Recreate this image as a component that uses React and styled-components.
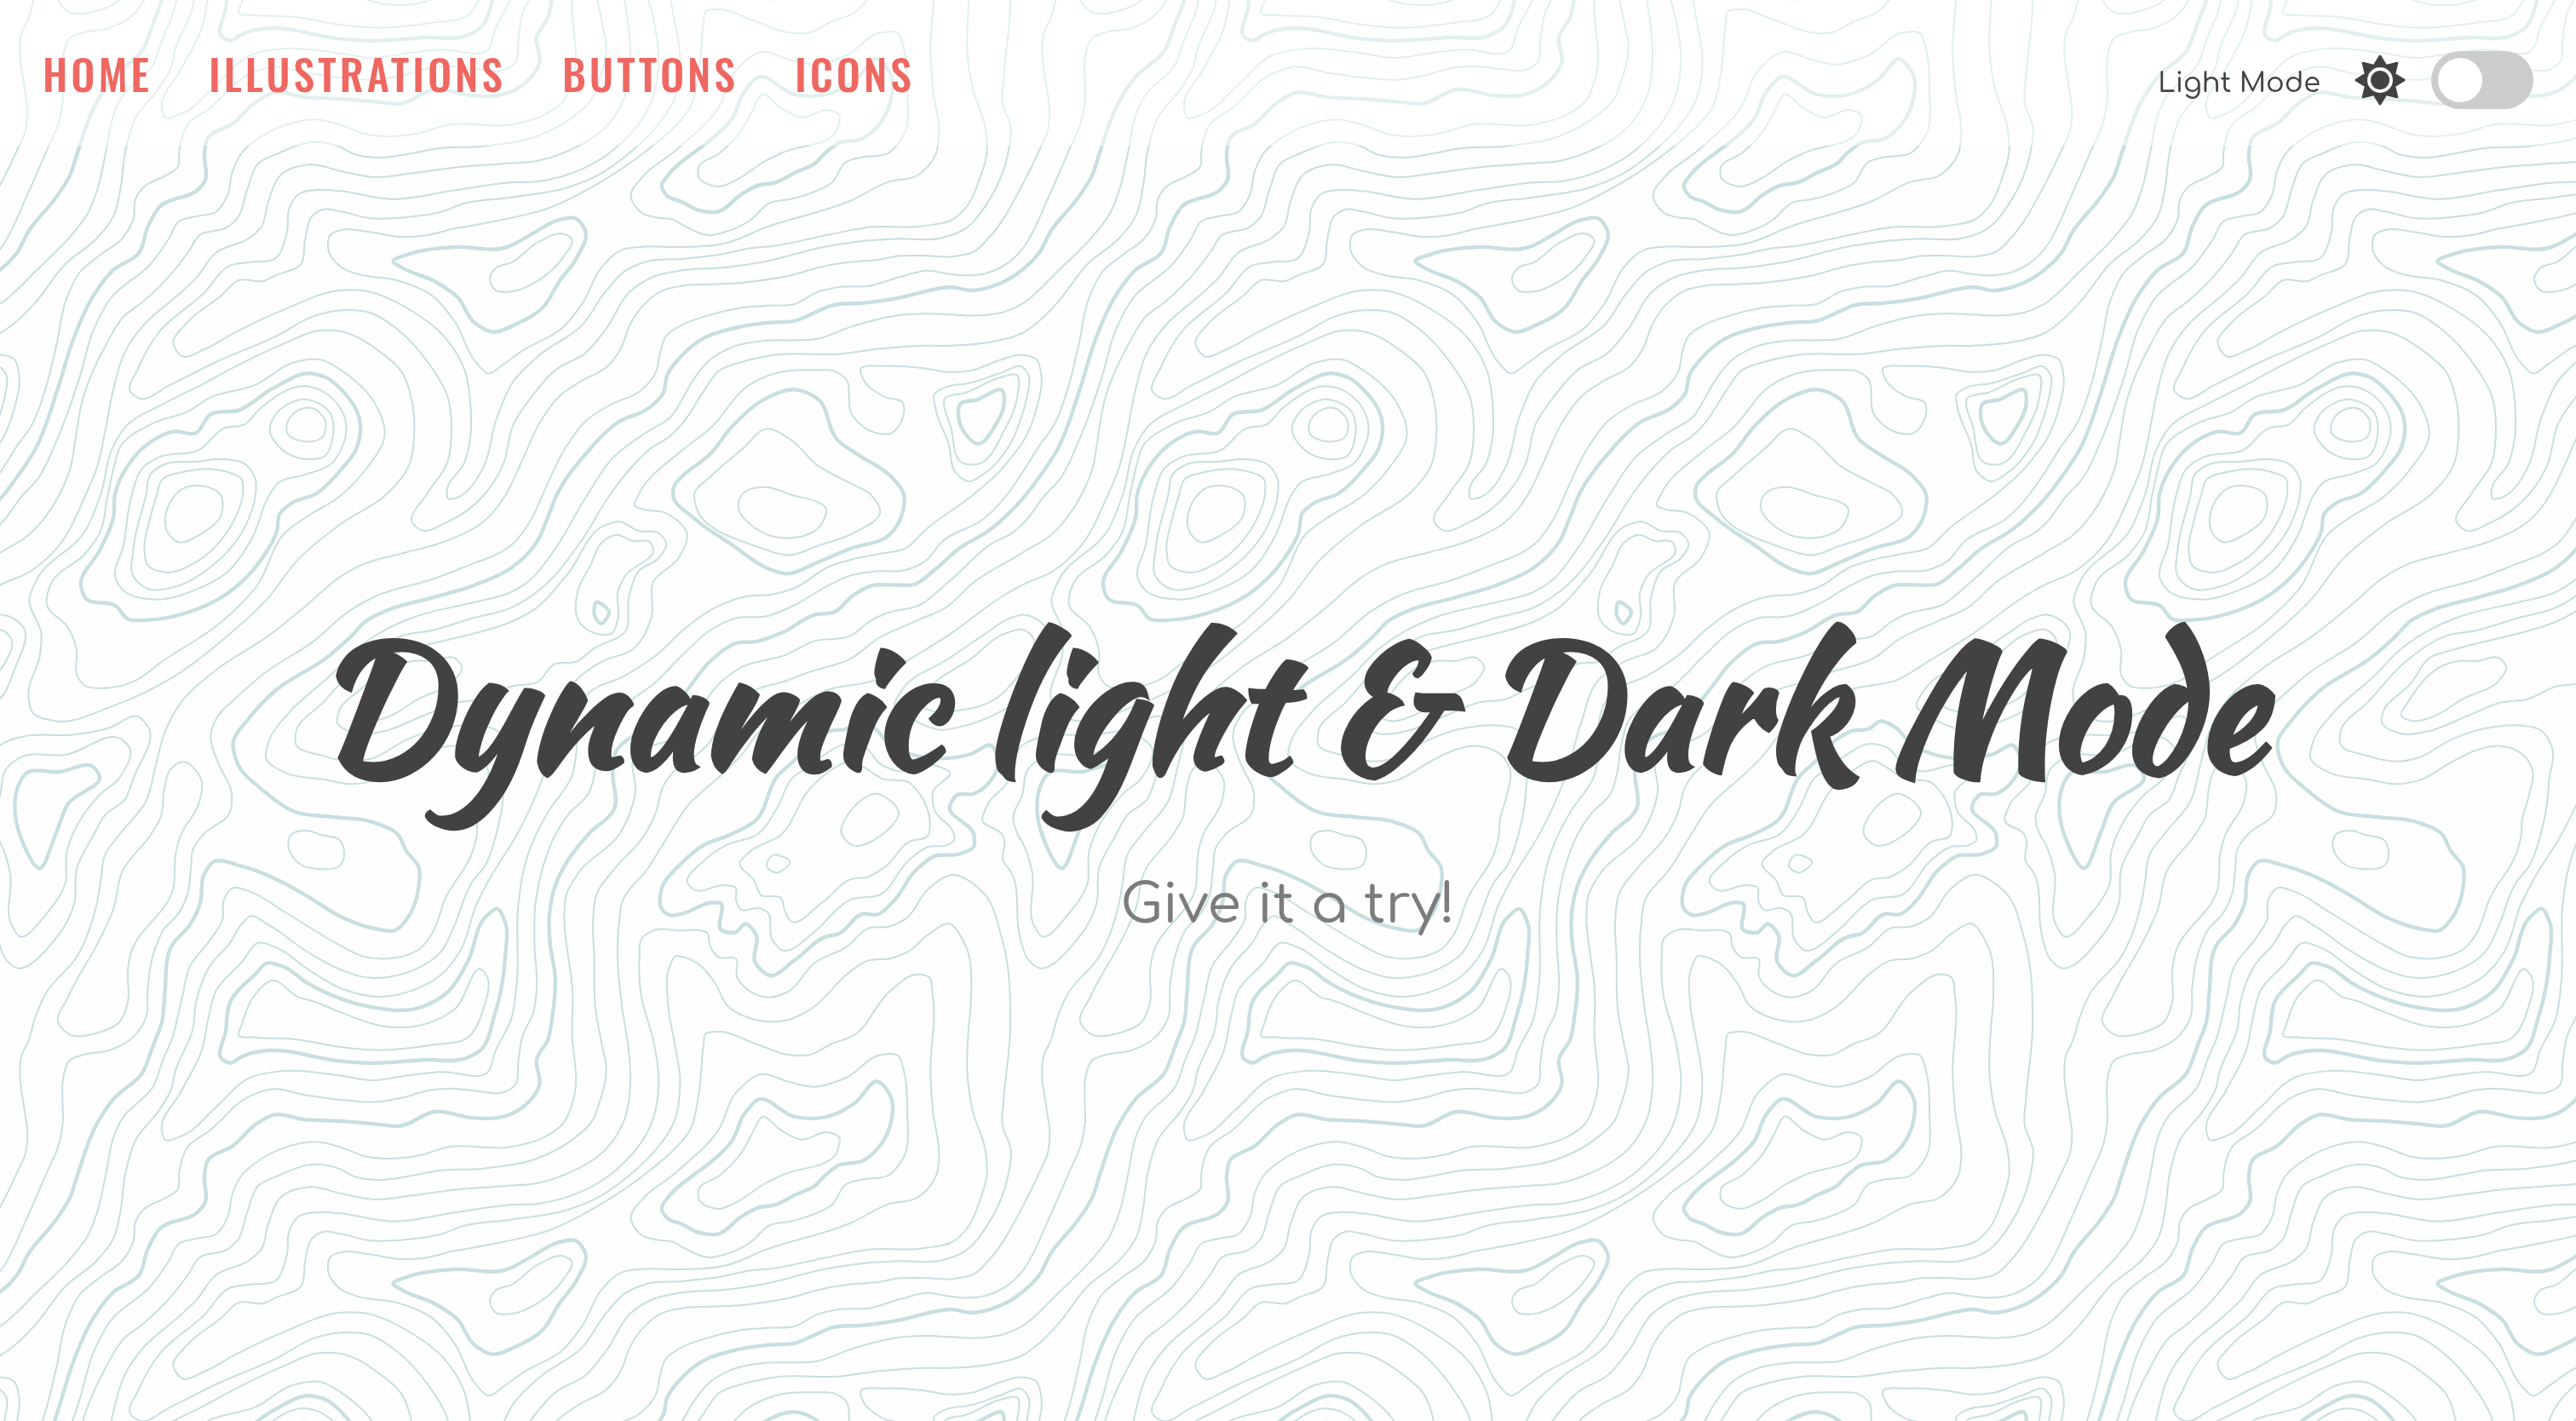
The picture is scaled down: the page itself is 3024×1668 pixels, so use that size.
import React, { useState } from 'react';
import styled, { createGlobalStyle, ThemeProvider } from 'styled-components';

const themes = {
  light: {
    page: '#fefefe',
    veil: 'rgba(255, 255, 255, 0.5)',
    contour: '#c7dfdf',
    text: '#424242',
    muted: '#7c7c7c',
    accent: '#ef6761',
    track: '#cccccc',
  },
  dark: {
    page: '#1f2326',
    veil: 'rgba(0, 0, 0, 0.5)',
    contour: '#36494b',
    text: '#f2f2f2',
    muted: '#b5b5b5',
    accent: '#ef6761',
    track: '#ef6761',
  },
};

/* ---------- Contour map ---------- */

// The map repeats every TILE units in both directions. Each line is a list of
// x,y points; a letter switches to the map sheet whose origin it names.
const TILE = 3600;
const SHEETS = {
  A: [0, 0], B: [1200, 0], C: [2400, 0],
  D: [0, 1200], E: [672, 1200], F: [1800, 1200], G: [3000, 1200],
  H: [0, 2400], I: [1200, 2400], J: [2400, 2400],
};

const MINOR = [
  'A 55,0 0,112 C 1080,300 1035,343 950,364 850,360 770,361 690,375 600,382 500,398 370,433 220,455 100,461 B 1200,467 1130,485 1070,530 1020,600 985,690 940,750 850,800 770,855 700,950 640,1080 582,1200 E 1080,45 1020,105 900,165 760,205 600,250 D 1200,290 1070,400 940,503 760,620 640,730 580,840 550,950 515,1080 420,1200 H 370,70 355,160 340,245 270,430 160,560 125,640 100,725 75,780 70,840 85,960 97,1060 90,1120',
  'A 160,0 90,160 30,290 0,337 C 1150,385 1080,420 1000,430 930,423 870,413 770,435 660,467 560,470 480,488 400,530 300,536 200,545 80,575 0,605 B 1145,645 1125,700 1110,770 1050,840 950,885 860,945 790,1040 712,1200 F 70,90 0,180 E 1090,205 980,250 850,300 650,360 560,410 430,520 260,630 140,735 D 780,765 742,850 770,950 815,1050 810,1120 715,1200 H 680,50 672,120 660,210 630,275 575,335 540,420 520,540 515,640 460,720 380,760 300,773 245,795 222,860 220,930 222,1000 210,1080',
  'A 372,0 345,120 310,210 250,290 120,420 50,490 0,530 C 1130,560 1050,571 950,568 870,564 750,572 600,610 470,655 390,658 300,659 180,682 100,727 40,800 0,870 B 1165,925 1080,980 960,1070 870,1200 F 150,200 70,300 0,345 E 1000,380 780,435 690,475 590,540 490,640 350,765 275,870 265,930 330,980 470,1005 570,1021 650,1007 760,945 860,898 930,887 1010,915 1047,975 1035,1060 1010,1150 I 479,0 460,70 370,220 320,350 280,400 210,430 140,436 70,425 0,390 H 1000,270 880,200 820,187 788,230 785,295 740,370 670,460 640,580 605,720 575,790 540,885 430,1000 405,1050',
  'A 440,0 425,120 400,220 340,300 235,385 120,530 60,590 0,633 C 1100,662 950,677 830,678 700,688 550,707 340,709 230,730 130,767 80,835 0,955 B 1160,995 1090,1040 1020,1110 950,1200 F 250,160 120,320 0,400 E 1000,435 850,480 740,500 600,590 470,730 370,840 370,880 460,920 580,941 640,930 760,865 880,825 990,814 1080,835 1115,890 1105,1010 1095,1110 1075,1200 I 510,105 460,170 400,320 350,415 270,470 170,500 90,502 0,475 H 1080,410 950,320 880,287 850,315 810,380 740,460 690,590 680,680 615,840 605,890 560,970 480,1070',
  'A 630,0 628,45 580,80 510,115 478,160 470,230 430,300 350,360 280,420 235,510 200,670 160,830 110,960 60,1030 0,1125 C 1148,1200 G 460,90 320,165 260,235 190,267 80,272 0,285 F 1120,320 1000,390 900,430 790,437 700,480 600,570 500,670 430,720 340,790 310,880 297,970 275,1050 200,1130 155,1200 I 710,120 685,250 682,380 690,540 680,620 640,710 625,800 615,880 570,907 480,902 390,893 310,900 210,927 120,941 0,933 H 1080,917 960,895 880,920 740,1040 660,1100',
  'A 850,0 820,60 800,150 760,207 690,222 630,240 595,300 530,390 390,510 330,620 280,790 200,1010 130,1150 83,1200 D 0,107 G 560,140 500,170 340,310 240,390 120,420 60,450 0,497 F 1060,520 970,565 810,610 740,660 690,720 620,830 550,870 500,885 435,925 438,1050 380,1200 I 840,130 795,210 787,290 800,420 815,530 815,700 822,920 780,1020 700,1072 590,1100 380,1099 280,1128 170,1140 80,1130 0,1100 H 1110,1081 1000,1102 900,1155',
  'A 980,0 910,35 870,130 835,230 800,260 700,290 665,345 590,440 500,525 440,570 370,680 290,870 265,1010 250,1100 210,1200 D 160,80 100,145 0,207 G 430,310 330,400 230,445 90,510 0,577 F 1040,630 960,660 860,690 770,750 720,840 690,885 650,920 580,970 535,1030 510,1120 470,1200 I 960,125 905,200 888,310 893,430 898,620 920,740 935,820 905,960 890,1000 820,1070 690,1140 500,1175 340,1183 250,1200 B 135,15 40,0 I 0,1178 H 1110,1160',
  'A 1200,62 1090,40 990,75 945,170 920,260 875,300 760,350 690,440 620,505 510,600 440,700 395,850 370,980 340,1110 303,1200 D 200,190 110,270 0,320 G 530,360 350,490 190,590 80,655 F 1115,690 1020,737 880,830 810,920 745,985 620,1100 555,1200 I 1080,120 990,240 982,290 975,430 990,600 1013,750 1020,870 1000,1000 940,1100 780,1200 B 690,27 580,36 400,50 250,70 120,84',
  'A 1200,133 1130,128 1050,145 1020,190 1010,280 970,370 880,383 810,395 720,490 560,630 490,750 460,840 490,862 600,815 760,735 980,640 1100,575 1200,553 B 100,560 200,620 310,740 380,870 390,970 375,1090 303,1200 E 780,100 810,127 900,100 1035,0 B 570,1100 610,950 670,860 760,760 860,705 940,610 1020,485 1100,435 1200,412 C 150,402 300,380 500,330 620,311 760,301 910,299 1000,265 1080,170 1150,0 J 1160,1110 1130,1020 1135,930 1158,680 1130,370 1060,200 950,141 870,190 790,295 730,323 660,328 580,395 470,450 370,555 310,572 240,550 195,500 193,437 130,430 100,390 90,345 70,337 0,337 I 1100,337 1060,365 1052,430 1057,560 1100,720 1120,870 1100,1000 945,1200 B 850,55 700,98 600,103 400,130 180,161',
  'A 1200,205 1140,197 1100,220 1075,300 1060,390 970,430 930,449 840,447 780,500 660,595 610,670 640,714 720,690 820,635 1000,550 1200,482 B 70,482 250,555 360,640 435,760 458,900 455,1010 435,1090 375,1185 E 905,15 930,15 B 432,1200 500,1110 550,930 610,800 700,710 850,605 930,490 1000,415 1080,380 1200,372 C 130,357 250,333 320,327 500,290 660,260 850,256 960,230 1010,180 1050,90 1075,0 J 1070,1110 1025,970 1007,850 1010,700 1020,570 1000,390 940,312 870,350 800,410 740,434 650,445 590,485 460,610 380,650 240,645 160,600 120,525 60,455 0,428 I 1180,427 1160,460 1153,600 1175,730 1195,860 1170,1020 1100,1120 1015,1200 B 900,80 800,120 600,155 430,178 350,207 230,225 100,228',
  'A 1200,270 1165,285 1155,330 1200,400 B 60,425 200,448 320,500 400,590 480,740 520,775 570,745 640,695 780,615 850,530 920,400 990,340 1050,330 1200,330 C 150,318 300,260 600,165 730,100 830,78 897,0 J 907,1130 885,970 877,840 885,570 870,500 830,491 740,545 600,710 530,735 450,775 370,773 260,735 120,693 85,700 78,740 60,920 30,1040 0,1080 I 1065,1200 B 900,110 740,190 550,238 400,265 290,290 200,293 100,277',
  'B 1167,0 1070,75 1022,150 1060,210 1120,227 1170,233 1200,250 C 100,288 160,275 240,237 310,175 390,160 450,142 530,103 580,30 640,13 727,0 J 780,1140 795,970 785,840 760,775 700,775 580,855 470,887 380,870 280,843 190,910 130,1040 0,1172',
  'C 133,0 60,50 60,80 130,117 200,90 290,30 350,0 J 550,1110 555,1065 520,1048 420,1073 350,1040 285,992 250,1050 210,1120',
  'B 545,405 600,385 700,310 790,285 812,300 780,370 700,445 600,487 545,482 525,440',
  'A 1200,627 1120,625 1000,670 850,740 700,820 580,880 440,965 395,1040 355,1200 D 300,130 130,300 103,370 145,490 140,570 100,710 115,770 190,798 400,745 600,650 800,500 940,370 1050,230 1200,105 E 690,0 B 240,1100 258,1000 250,870 215,770 140,700',
  'A 1200,763 1130,727 1030,738 900,815 740,860 660,910 540,950 420,1040 405,1090 380,1200 D 350,140 300,210 180,315 165,390 240,470 270,550 272,640 300,675 360,683 480,655 570,590 780,450 900,330 1010,130 1080,80 1200,5 B 90,1110 155,990 120,880 50,800',
  'A 1200,900 1140,840 1075,820 920,895 860,955 790,968 700,1045 560,1070 500,1110 465,1200 D 435,180 408,300 430,335 550,371 680,340 800,275 890,150 950,0 A 980,1160 1080,1130 1170,1090 1200,1045 B 20,970',
  'A 970,920 1080,867 1160,910 1172,1000 1145,1065 1080,1077 990,1040 950,970',
  'A 1010,955 1050,905 1100,897 1145,940 1135,1000 1090,1015 1010,980',
  'A 515,1200 530,1130 580,1095 700,1085 780,1077 870,1100 900,1150 900,1200 D 870,100 750,250 620,325 520,333 470,290 470,190',
  'A 553,1200 570,1150 640,1123 800,1122 850,1145 855,1200 D 820,100 680,245 590,276 520,250 508,190 525,100',
  'D 620,0 590,50 588,130 625,168 700,145 780,70 775,0 A 740,1178 690,1170 640,1183',
  'C 1200,710 1130,725 1020,765 940,770 840,755 720,749 630,762 640,795 710,855 780,880 780,930 740,985 660,975 600,920 575,790 540,767 480,763 330,775 240,815 100,970 0,1048 B 1050,1200 F 435,40 460,52 540,65 620,140 590,225 500,310 495,430 430,545 320,590 225,660 170,800 115,990 20,1200 I 530,145 480,240 420,410 350,495 260,545 140,570 0,540 H 1080,470 980,400 910,380 850,450 760,550 735,640 710,760 640,900 570,1040 580,1073 640,1060 760,960 880,855 1000,831 1200,848 I 110,864 250,845 350,835 520,833 545,760 600,650 620,520 625,250 645,120 687,0 F 130,1120 215,990 232,880 235,780 270,705 400,640 520,560 610,475 700,410 830,360 920,353 1000,330 1120,255 1200,230 G 100,210 190,190 260,125 430,0 C 1120,1120 1170,1060 A 0,1020 50,900 67,780 50,725',
  'A 0,753 22,780 18,850 0,920 C 1160,1020 1070,1125 1010,1155 970,1130 940,1020 895,900 890,850 940,820 1010,810 1120,775',
  'C 930,860 1000,843 1120,790 1180,780 1180,870 1140,970 1040,1095 990,1090 950,970',
  'C 45,1200 100,1140 210,1045 305,970 380,1005 480,1100 600,1165 665,1200 G 100,60 0,140 F 1080,182 980,215 880,190 650,40',
  'C 215,1200 295,1175 380,1200 F 1110,60 1090,110 950,154 860,120 800,40',
  'F 0,678 E 1030,722 940,733 820,780 680,835 580,843 515,800 520,770 620,665 680,580 780,545 1000,490 F 0,450 90,400 200,280 330,110 380,97 450,130 520,138 547,175 520,225 450,270 415,360 405,480 290,545 230,590 150,600 95,660',
  'F 320,170 370,143 430,165 490,170 500,190 400,290 375,350 378,430 355,490 290,488 240,450 235,340 280,250',
  'E 740,600 780,588 850,588 930,578 955,610 930,655 800,722 700,782 620,798 585,780 610,730',
  'D 640,943 710,1010 700,1090 637,1200 H 620,60 610,190 460,420 450,480 450,590 420,660 350,695 240,700 205,660 240,570 350,370 400,260 430,130 530,0 D 565,1140 580,1030 600,970',
  'G 610,425 683,470 650,620 600,720 540,757 400,815 310,830 220,797 150,745 180,685 340,580 480,485 550,440',
  'G 610,480 640,510 620,590 600,620 500,725 370,763 270,760 230,735 290,665 420,580 530,495',
  'D 0,885 90,852 250,848 380,825 490,785 522,820 470,1000 440,1075 370,1130 330,1200 H 270,120 262,240 200,360 50,465 15,430 0,390 J 1190,350 1160,130 1133,90 1137,20 G 530,1200 460,1150 480,1090 550,1010 565,940',
  'D 0,1060 20,970 70,928 230,918 430,865 455,890 420,1000 350,1060 255,1200 H 235,60 230,170 170,270 65,355 42,320 35,130 0,25 G 585,1200 568,1140',
  'F 865,1200 940,1100 990,1000 1030,970 1100,920 1180,880 G 50,895 100,950 160,975 300,957 345,980 285,1050 290,1110 360,1200 J 960,20 930,37 870,42 800,90 700,210 590,230 540,270 470,340 350,404 320,370 300,270 275,258 210,263 192,230 190,185 160,177 40,190 22,170 80,90 160,35',
  'F 950,1200 1050,1040 1130,970 1200,940 G 40,960 110,1003 200,1015 235,1050 275,1170 270,1200 J 800,25 720,110 650,150 600,155 500,235 385,303 365,270 350,222 280,212 255,160 205,100 240,60',
  'G 0,1110 85,1055 165,1120 105,1200 J 600,35 565,0',
  'J 320,72 382,95 330,133 300,110',
  'D 1025,1200 1080,1185 1130,1200 H 1200,22 I 12,60 0,105 H 1120,120 1060,105 1015,35',
  'H 840,705 850,672 900,560 955,513 1060,575 1090,582 1200,625 I 160,675 300,665 400,615 500,478 510,490 500,620 450,712 320,740 80,756 0,747 H 1040,720 900,713',
];

const MAJOR = [
  'A 272,0 245,80 190,165 100,275 60,350 0,410 C 1110,463 1020,483 950,471 880,481 770,508 640,527 530,535 470,560 400,590 320,595 200,612 80,650 0,713 B 1150,780 1135,845 1080,900 980,945 870,1050 762,1200 F 130,80 90,170 0,260 E 1000,320 850,365 690,410 620,445 560,505 480,575 300,690 200,795 150,870 165,950 250,1040 370,1120 500,1137 640,1155 730,1200 I 230,55 275,115 275,180 230,300 195,335 120,330 0,288 H 1080,215 970,155 850,110 750,96 718,140 705,240 670,315 605,390 580,560 570,660 540,740 500,840 400,930 340,1020',
  'A 720,0 720,100 700,125 560,190 520,260 490,350 400,410 330,500 260,650 200,840 120,1050 60,1140 15,1200 G 550,70 480,130 380,190 290,268 220,318 150,320 70,322 0,360 F 1140,415 1070,425 950,490 860,520 800,523 700,590 620,690 560,765 500,825 425,855 370,905 358,980 365,1105 270,1200 I 800,90 755,180 735,280 737,380 755,500 745,640 730,720 690,790 700,880 640,960 560,995 470,997 330,975 210,1025 120,1018 0,1008 H 1080,1003 960,987 900,1020 820,1095 730,1150',
  'B 1200,30 1150,80 1130,115 1150,150 1200,170 C 60,200 130,205 210,145 270,113 330,103 400,68 470,35 505,0 J 550,1165 640,1147 695,1100 740,1000 740,930 690,868 610,945 510,993 400,993 270,932 220,985 180,1075 100,1155 40,1200',
  'B 185,382 250,352 400,330 580,332 680,280 760,237 830,230 862,275 830,370 770,450 710,545 620,600 530,628 470,595 410,505 330,450 220,405',
  'A 1200,830 1150,790 1095,775 960,828 840,905 740,920 690,985 610,980 540,1010 450,1100 405,1200 D 400,80 350,200 285,320 300,365 410,395 450,440 520,443 650,420 800,350 920,230 975,130 985,70 1030,30 1110,0 A 1200,1115 B 55,1040 65,930',
  'C 980,885 1040,868 1130,835 1135,890 1110,950 1040,1022 1010,1000 975,915',
  'C 0,1140 100,1060 180,960 300,862 400,832 480,865 550,1010 620,1060 740,1140 783,1200 G 180,60 130,145 0,190 F 1080,240 970,280 900,260 780,180 650,90 570,0 B 1175,1170',
  'F 300,381 345,415 315,455 295,430',
  'D 60,1040 90,985 210,978 330,962 350,990 240,1090 195,1200 H 140,118 70,0 D 52,1110',
  'F 1120,835 1185,825 G 20,800 80,825 130,880 205,915 420,915 490,885 515,930 480,1020 430,1055 370,1060 345,1100 430,1200 J 1030,40 980,67 890,75 820,130 750,230 690,280 640,278 550,350 510,358 400,440 310,495 260,450 262,350 225,313 190,343 140,335 135,240 110,238 0,278 I 1160,283 1130,260 1130,190 1200,100 J 80,35 170,0 F 860,1150 940,990 1000,935 1060,870',
  'H 880,770 920,762 1200,797 I 80,803 300,792 440,787 490,760 540,640 580,420 580,310 550,260 510,290 450,440 380,550 280,608 100,605 0,577 H 1080,520 1000,465 940,452 900,490 810,590 795,690 782,790 810,803 850,782',
];

const wrap = (d) => d - TILE * Math.round(d / TILE);

// Lays the points of one line end to end across tile edges.
function unfold(line) {
  let origin = [0, 0];
  const points = [];
  line.split(' ').forEach((token) => {
    if (SHEETS[token]) {
      origin = SHEETS[token];
      return;
    }
    const [x, y] = token.split(',').map(Number);
    const p = [x + origin[0], y + origin[1]];
    const last = points[points.length - 1];
    points.push(last ? [last[0] + wrap(p[0] - last[0]), last[1] + wrap(p[1] - last[1])] : p);
  });
  return points;
}

// Smooth closed curve through the points, repeated wherever it meets the tile.
function trace(line) {
  const pts = unfold(line);
  const n = pts.length;
  const end = pts[n - 1];
  const shift = [0, 1].map((k) => end[k] + wrap(pts[0][k] - end[k]) - pts[0][k]);
  const at = (i) => {
    const turn = Math.floor(i / n);
    const p = pts[i - turn * n];
    return [p[0] + turn * shift[0], p[1] + turn * shift[1]];
  };
  const gap = (a, b) => Math.hypot(b[0] - a[0], b[1] - a[1]) || 1;
  const tangent = (i) => {
    const [a, b, c] = [at(i - 1), at(i), at(i + 1)];
    const d0 = gap(a, b);
    const d1 = gap(b, c);
    return [0, 1].map((k) => (((b[k] - a[k]) / d0) * d1 + ((c[k] - b[k]) / d1) * d0) / (d0 + d1));
  };
  const xs = pts.map((p) => p[0]);
  const ys = pts.map((p) => p[1]);
  const near = (min, max) => {
    const list = [];
    for (let o = Math.floor(-max / TILE); o * TILE + min < TILE + 60; o += 1) list.push(o * TILE);
    return list;
  };
  let out = '';
  near(Math.min(...xs) - 60, Math.max(...xs) + 160).forEach((ox) => {
    near(Math.min(...ys) - 60, Math.max(...ys) + 160).forEach((oy) => {
      const f = (x, y) => `${Math.round(x + ox)} ${Math.round(y + oy)}`;
      out += `M${f(...at(0))}`;
      for (let i = 0; i < n; i += 1) {
        const a = at(i);
        const b = at(i + 1);
        const r = gap(a, b) / 3;
        const ta = tangent(i);
        const tb = tangent(i + 1);
        out += `C${f(a[0] + ta[0] * r, a[1] + ta[1] * r)} ${f(b[0] - tb[0] * r, b[1] - tb[1] * r)} ${f(...b)}`;
      }
    });
  });
  return out;
}

const minorPath = MINOR.map(trace).join('');
const majorPath = MAJOR.map(trace).join('');

const Map = styled.svg`
  position: fixed;
  inset: 0;
  z-index: -1;
  width: 100%;
  height: 100%;
  fill: none;
  stroke: ${({ theme }) => theme.contour};
`;

function ContourMap() {
  return (
    <Map aria-hidden="true">
      <defs>
        <pattern id="contours" y="180" width="1200" height="1200" patternUnits="userSpaceOnUse">
          <g transform="scale(0.33333333)">
            <path d={minorPath} strokeWidth="6" />
            <path d={majorPath} strokeWidth="13" />
          </g>
        </pattern>
      </defs>
      <rect width="100%" height="100%" fill="url(#contours)" stroke="none" />
    </Map>
  );
}

/* ---------- Page ---------- */

const GlobalStyle = createGlobalStyle`
  *, *::before, *::after { box-sizing: border-box; }
  body {
    margin: 0;
    background: ${({ theme }) => theme.page};
    color: ${({ theme }) => theme.text};
    font-family: Comfortaa, Lato, "Open Sans", sans-serif;
    font-weight: 500;
  }
`;

const Page = styled.div`
  display: flex;
  flex-direction: column;
  min-height: 100vh;
`;

const Header = styled.header`
  display: flex;
  align-items: center;
  justify-content: space-between;
  padding: 42px 50px 43px;
  background: ${({ theme }) => theme.veil};
`;

const Nav = styled.nav`
  display: flex;
  gap: 66px;
`;

const NavLink = styled.a`
  color: ${({ theme }) => theme.accent};
  font-family: Oswald, "Liberation Sans Narrow", "Liberation Sans", sans-serif;
  font-size: 50px;
  font-weight: 500;
  letter-spacing: 4px;
  line-height: 70px;
  text-decoration: none;
  text-transform: uppercase;
`;

const ModeSwitch = styled.label`
  display: flex;
  align-items: center;
  padding-top: 18px;
  cursor: pointer;
`;

const ModeName = styled.span`
  padding-top: 8px;
  margin-right: 40px;
  font-size: 32px;
  line-height: 40px;
`;

const Icon = styled.svg`
  width: 60px;
  height: 60px;
  margin-right: 30px;
  fill: currentColor;
`;

const Toggle = styled.input`
  appearance: none;
  display: flex;
  align-items: center;
  width: 120px;
  height: 68px;
  margin: 0;
  padding: 8px;
  border-radius: 34px;
  background: ${({ theme }) => theme.track};
  cursor: pointer;

  &::before {
    content: "";
    width: 52px;
    height: 52px;
    border-radius: 50%;
    background: #ffffff;
    transition: margin 0.4s;
  }

  &:checked::before {
    margin-left: 52px;
  }
`;

const Hero = styled.main`
  flex: 1;
  display: flex;
  flex-direction: column;
  align-items: center;
  justify-content: center;
  gap: 54px;
  padding: 0 48px 58px;
  text-align: center;
`;

const Title = styled.h1`
  margin: 0;
  font-family: "Kaushan Script", Lato, sans-serif;
  font-size: 200px;
  font-weight: 700;
  line-height: 290px;
`;

const Subtitle = styled.p`
  margin: 0;
  color: ${({ theme }) => theme.muted};
  font-size: 64px;
  line-height: 72px;
`;

// Eight-pointed star with a round hole for the disc.
const sunStar = Array.from({ length: 16 }, (_, i) => {
  const radius = i % 2 ? 18 : 28;
  const angle = (i * Math.PI) / 8;
  return `${i ? 'L' : 'M'}${(radius * Math.sin(angle)).toFixed(2)} ${(-radius * Math.cos(angle)).toFixed(2)}`;
}).join('');

function SunIcon() {
  return (
    <Icon viewBox="-30 -30 60 60" aria-hidden="true">
      <circle r="11" />
      <path
        d={`${sunStar}ZM0 -16.5A16.5 16.5 0 1 0 0 16.5A16.5 16.5 0 1 0 0 -16.5Z`}
        fillRule="evenodd"
        stroke="currentColor"
        strokeWidth="3"
        strokeLinejoin="round"
      />
    </Icon>
  );
}

function MoonIcon() {
  return (
    <Icon viewBox="-30 -30 60 60" aria-hidden="true">
      <path d="M8 -26A27 27 0 1 0 26 10A22 22 0 0 1 8 -26Z" />
    </Icon>
  );
}

const LINKS = ['Home', 'Illustrations', 'Buttons', 'Icons'];

export default function App() {
  const [dark, setDark] = useState(false);

  return (
    <ThemeProvider theme={dark ? themes.dark : themes.light}>
      <GlobalStyle />
      <ContourMap />
      <Page>
        <Header>
          <Nav>
            {LINKS.map((name) => (
              <NavLink key={name} href={`#${name.toLowerCase()}`}>{name}</NavLink>
            ))}
          </Nav>
          <ModeSwitch>
            <ModeName>{dark ? 'Dark Mode' : 'Light Mode'}</ModeName>
            {dark ? <MoonIcon /> : <SunIcon />}
            <Toggle type="checkbox" checked={dark} onChange={() => setDark(!dark)} />
          </ModeSwitch>
        </Header>
        <Hero>
          <Title>Dynamic light &amp; Dark Mode</Title>
          <Subtitle>Give it a try!</Subtitle>
        </Hero>
      </Page>
    </ThemeProvider>
  );
}
